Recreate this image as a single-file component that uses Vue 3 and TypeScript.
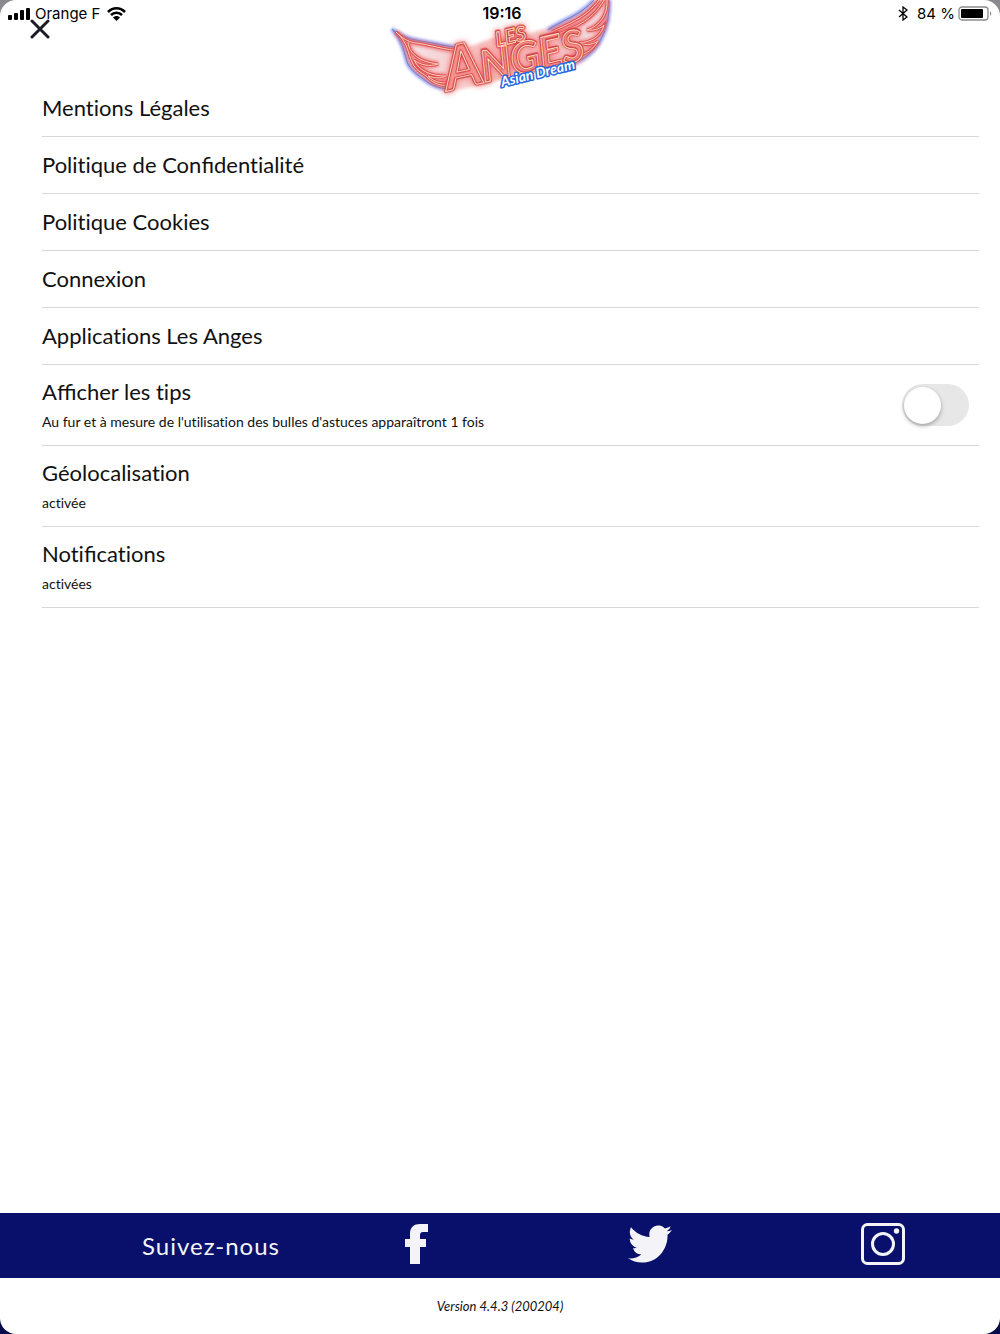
<script setup lang="ts">
import { ref } from 'vue'

interface Entry {
  title: string
  detail?: string
  toggle?: boolean
}

const tips = ref(false)

const entries: Entry[] = [
  { title: 'Mentions Légales' },
  { title: 'Politique de Confidentialité' },
  { title: 'Politique Cookies' },
  { title: 'Connexion' },
  { title: 'Applications Les Anges' },
  {
    title: 'Afficher les tips',
    detail: "Au fur et à mesure de l'utilisation des bulles d'astuces apparaîtront 1 fois",
    toggle: true,
  },
  { title: 'Géolocalisation', detail: 'activée' },
  { title: 'Notifications', detail: 'activées' },
]

// Only the "fi" and "ffi" groups are joined; "ti" stays as two letters.
const pieces = (text: string): string[] => text.split(/(f+i)/)
</script>

<template>
  <div class="screen">
    <header class="header">
      <svg class="logo" viewBox="0 0 232 100" role="img" aria-label="Les Anges Asian Dream">
        <defs>
          <filter id="glow" x="-20%" y="-20%" width="140%" height="140%">
            <feGaussianBlur stdDeviation="1.5" />
          </filter>
          <linearGradient id="haze" x1="0" y1="0" x2="1" y2="0">
            <stop offset="0" stop-color="#f1e6ea" />
            <stop offset="0.5" stop-color="#f7a9a6" />
            <stop offset="1" stop-color="#efe3ea" />
          </linearGradient>
          <g id="wings">
            <path d="M12 32C18 38 24 42 32 43C46 45 58 49 76 51" />
            <path d="M12 32C24 42 24 54 28 62C32 72 40 73 44 78C50 84 58 86 66 86" />
            <path d="M24 42C25 54 36 62 54 64C46 67 36 65 30 60C36 72 48 76 62 76C56 79 50 78 44 76C51 83 59 84 68 82" />
            <path d="M168 32C182 24 200 20 215 0" />
            <path d="M172 35C188 28 208 22 220 0" />
            <path d="M223 0C224 14 216 26 203 30C211 31 217 28 220 25C217 37 207 42 195 43C203 46 210 44 214 41C208 52 198 56 186 57" />
          </g>
          <g id="rim">
            <path d="M8 29C18 38 30 40 42 42C54 44 66 47 78 48" />
            <path d="M8 29C20 42 20 54 24 64C30 74 36 76 42 81C50 87 58 89 68 89" />
            <path d="M164 30C178 20 196 16 210 0" />
            <path d="M225 0C226 26 216 56 186 64" />
          </g>
        </defs>
        <path d="M10 30C26 42 54 45 76 50L108 38L145 33C176 25 200 18 215 0H223C226 28 212 54 186 63L74 90C42 83 26 68 10 30Z" fill="url(#haze)" filter="url(#glow)" opacity=".8" />
        <use href="#rim" fill="none" stroke="#6d84ee" stroke-width="4" opacity=".8" filter="url(#glow)" />
        <use href="#rim" fill="none" stroke="#4f5fae" stroke-width="1" opacity=".6" />
        <use href="#wings" fill="none" stroke="#f0686c" stroke-width="6" opacity=".7" filter="url(#glow)" />
        <use href="#wings" fill="none" stroke="#dc5256" stroke-width="3" />
        <use href="#wings" fill="none" stroke="#ffd4b8" stroke-width="1" />
        <g transform="rotate(-13 68 91)">
          <g class="neon-tube">
            <text x="64" y="90" font-size="60">A</text>
            <text x="101" y="90" font-size="43">NGES</text>
            <text x="122" y="58" font-size="20">LES</text>
          </g>
          <g class="neon-core">
            <text x="64" y="90" font-size="60">A</text>
            <text x="101" y="90" font-size="43">NGES</text>
            <text x="122" y="58" font-size="20">LES</text>
          </g>
        </g>
        <text class="tagline" x="118" y="87" font-size="14" transform="rotate(-14 118 87)">Asian Dream</text>
      </svg>

      <div class="status">
        <div class="status-side">
          <svg class="signal" viewBox="0 0 22 12" aria-hidden="true">
            <rect x="0" y="7" width="4" height="5" rx="1" />
            <rect x="6" y="5" width="4" height="7" rx="1" />
            <rect x="12" y="2" width="4" height="10" rx="1" />
            <rect x="18" y="0" width="4" height="12" rx="1" />
          </svg>
          <span class="carrier">Orange F</span>
          <svg class="wifi" viewBox="0 0 19 14" aria-hidden="true">
            <path d="M1 5C6 0 13 0 18 5" />
            <path d="M4 8C7 5 12 5 15 8" />
            <path class="solid" d="M6 10.500C8 8.500 11 8.500 13 10.500L9.500 14Z" />
          </svg>
        </div>
        <span class="time">19:16</span>
        <div class="status-side end">
          <svg class="bluetooth" viewBox="0 0 10 15" aria-hidden="true">
            <path d="M1 4L9 11L5 14V1L9 4L1 11" />
          </svg>
          <span>84 %</span>
          <svg class="battery" viewBox="0 0 34 15" aria-hidden="true">
            <rect x="1" y="1" width="29" height="13" rx="3" fill="#fff" stroke="#8c8c8c" stroke-width="1.300" />
            <rect x="3" y="3" width="22" height="9" rx="1" />
            <path d="M32 5Q34.500 7.500 32 10Z" fill="#8c8c8c" />
          </svg>
        </div>
      </div>

      <button class="close" type="button" aria-label="Fermer">
        <svg viewBox="0 0 20 20" aria-hidden="true"><path d="M2 2L18 18M18 2L2 18" /></svg>
      </button>
    </header>

    <main class="list">
      <section v-for="entry in entries" :key="entry.title" class="row" :class="{ tall: entry.detail }">
        <component :is="entry.toggle ? 'label' : 'div'" class="copy" :for="entry.toggle ? 'tips' : undefined">
          <span class="title"><span v-for="(piece, i) in pieces(entry.title)" :key="i" :class="{ joined: i % 2 }">{{ piece }}</span></span>
          <span v-if="entry.detail" class="detail">{{ entry.detail }}</span>
        </component>
        <input v-if="entry.toggle" id="tips" v-model="tips" class="switch" type="checkbox" role="switch" />
      </section>
    </main>

    <nav class="follow">
      <span class="follow-label">Suivez-nous</span>
      <a href="#facebook" aria-label="Facebook">
        <svg class="facebook" viewBox="0 0 24 42" aria-hidden="true">
          <path d="M23 1V9H18Q15 9 15 12V16H21V24H15V41H5V24H0V16H5V11C5 4 9 1 15 1Z" />
        </svg>
      </a>
      <a href="#twitter" aria-label="Twitter">
        <svg class="twitter" viewBox="0 0 24 20" preserveAspectRatio="none" aria-hidden="true">
          <path d="M23.950 2.570a10 10 0 01-2.820.780 4.960 4.960 0 002.160-2.730c-.950.560-2 .960-3.130 1.190a4.920 4.920 0 00-8.380 4.480C7.690 6.100 4.070 4.130 1.640 1.160a4.820 4.820 0 00-.670 2.480c0 1.710.870 3.210 2.190 4.100a4.900 4.900 0 01-2.230-.620v.060a4.920 4.920 0 003.950 4.830 5 5 0 01-2.210.080 4.940 4.940 0 004.600 3.420A9.870 9.870 0 010 17.540a13.990 13.990 0 007.560 2.210c9.050 0 14-7.500 14-13.990 0-.210 0-.420-.020-.630a9.940 9.940 0 002.410-2.560z" />
        </svg>
      </a>
      <a href="#instagram" aria-label="Instagram">
        <svg class="instagram" viewBox="0 0 44 42" aria-hidden="true">
          <rect x="1.500" y="1.500" width="41" height="39" rx="5" />
          <circle cx="22" cy="21" r="10.500" />
          <circle class="lens" cx="35.500" cy="8" r="2.700" />
        </svg>
      </a>
    </nav>
    <footer class="version">Version 4.4.3 (200204)</footer>
  </div>
</template>

<style>
body {
  margin: 0;
  background: linear-gradient(#8a8a8e 50%, #060b4a 50%);
}
</style>

<style scoped>
.screen {
  display: flex;
  flex-direction: column;
  min-height: 100vh;
  border-radius: 16px;
  background: #fff;
  color: #111;
  font-family: Lato, sans-serif;
}

.header {
  position: relative;
  display: flex;
  justify-content: center;
  height: 80px;
}

.logo {
  flex: none;
  width: 232px;
  height: 100px;
  overflow: visible;
}

.logo text {
  font-family: Lato, sans-serif;
  font-style: italic;
  font-weight: 700;
}

.neon-tube {
  fill: #f58f8c;
  stroke: #cf4347;
  stroke-width: 3px;
  stroke-linejoin: round;
  filter: drop-shadow(0 0 3px #f0686c);
}

.neon-core {
  fill: none;
  stroke: #ffd9bc;
  stroke-width: 1px;
}

.logo .tagline {
  fill: #fff;
  stroke: #2368e0;
  stroke-width: 3px;
  paint-order: stroke;
  stroke-linejoin: round;
}

.status {
  position: absolute;
  inset: 0 0 auto;
  display: grid;
  grid-template-columns: 1fr auto 1fr;
  align-items: center;
  height: 27px;
  padding: 0 8px;
  color: #000;
  font: 15px/27px Inter, sans-serif;
}

.status-side {
  display: flex;
  align-items: center;
  gap: 5px;
}

.end {
  justify-content: flex-end;
  gap: 3px;
}

.time {
  margin-left: 4px;
  font-size: 16px;
  font-weight: 600;
}

.signal {
  width: 22px;
  height: 12px;
}

.wifi {
  width: 19px;
  height: 14px;
  margin-left: 2px;
  fill: none;
  stroke: #000;
  stroke-width: 2.5;
}

.wifi .solid {
  fill: #000;
  stroke: none;
}

.bluetooth {
  width: 10px;
  height: 15px;
  margin-right: 6px;
  fill: none;
  stroke: #000;
  stroke-width: 1.3;
}

.battery {
  width: 34px;
  height: 15px;
}

.close {
  position: absolute;
  top: 19px;
  left: 30px;
  width: 20px;
  height: 20px;
  padding: 0;
  border: 0;
  background: none;
}

.close svg {
  display: block;
  fill: none;
  stroke: #1c1c24;
  stroke-width: 3;
  stroke-linecap: round;
}

.list {
  flex: 1;
  margin: 0 21px 0 42px;
}

.row {
  box-sizing: border-box;
  display: flex;
  align-items: center;
  justify-content: space-between;
  min-height: 57px;
  border-bottom: 1px solid #d8d8d8;
}

.tall {
  min-height: 81px;
}

.copy {
  display: flex;
  flex-direction: column;
  gap: 6px;
  font-variant-ligatures: none;
}

.title {
  font-size: 22px;
  line-height: 28px;
}

.joined {
  font-variant-ligatures: normal;
}

.detail {
  font-size: 14px;
  line-height: 20px;
}

.switch {
  appearance: none;
  flex: none;
  display: flex;
  align-items: center;
  box-sizing: border-box;
  width: 67px;
  height: 42px;
  margin: 0 10px 0 0;
  padding: 0 2px;
  border-radius: 21px;
  background: #e7e7e7;
}

.switch::before {
  content: '';
  width: 37px;
  height: 37px;
  border-radius: 50%;
  background: #fff;
  box-shadow: 0 2px 4px rgb(0 0 0 / 30%);
}

.switch:checked {
  justify-content: flex-end;
  background: #08106b;
}

.follow {
  display: grid;
  grid-template-columns: 9fr 7fr 7fr 7fr;
  align-items: center;
  height: 65px;
  background: #08106b;
  color: #f4f4f8;
}

.follow-label {
  padding-right: 20px;
  text-align: right;
  font-size: 24px;
  letter-spacing: 1px;
}

.follow a {
  display: flex;
  justify-content: center;
  padding-bottom: 4px;
}

.follow svg {
  fill: #f4f4f8;
}

.facebook {
  width: 24px;
  height: 42px;
}

.twitter {
  width: 44px;
  height: 38px;
}

.instagram {
  width: 44px;
  height: 42px;
}

.follow .instagram {
  fill: none;
  stroke: #f4f4f8;
  stroke-width: 3;
}

.instagram .lens {
  fill: #f4f4f8;
  stroke: none;
}

.version {
  height: 56px;
  font-size: 13px;
  font-style: italic;
  font-variant-ligatures: none;
  line-height: 56px;
  text-align: center;
}
</style>
